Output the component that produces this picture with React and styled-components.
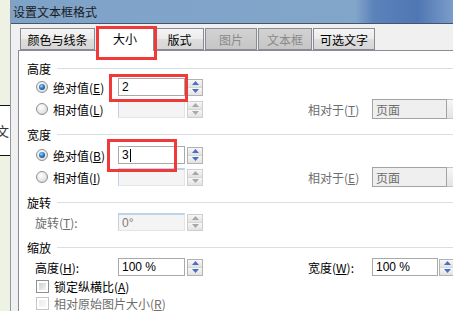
import React from 'react';
import styled, { createGlobalStyle } from 'styled-components';

const Global = createGlobalStyle`
  html, body { margin: 0; padding: 0; background: #eef2e2; }
  body { font-family: "Noto Sans CJK SC", "Liberation Sans", sans-serif; font-size: 12px; }
  * { box-sizing: border-box; }
`;

const Screen = styled.div`
  width: 453px;
  height: 311px;
  overflow: hidden;
  display: flex;
  position: relative;
  background: #eef2e2;
`;

const Desktop = styled.div`
  width: 10px;
  flex: none;
  display: flex;
  flex-direction: column;
  padding-top: 105px;
`;

const DocEdge = styled.div`
  height: 51px;
  background: #fff;
  border-top: 1px solid #111;
  border-bottom: 1px solid #111;
  display: flex;
  align-items: center;
  overflow: hidden;
  span { margin-left: -4px; font-size: 13px; color: #333; line-height: 1; }
`;

const Window = styled.div`
  flex: 1;
  min-width: 0;
  display: flex;
  flex-direction: column;
  border-left: 1px solid #8f9aa6;
`;

const TitleBar = styled.div`
  height: 24px;
  flex: none;
  border-bottom: 1px solid #44566b;
  background: linear-gradient(90deg, #7fa2c8 0%, #82a5ca 78%, #5c82ba 82%, #4f77b3 92%, #7b9dc9 100%);
  padding-left: 2px;
  display: flex;
  align-items: center;
  color: #1a1a1a;
  font-size: 12px;
`;

const Body = styled.div`
  flex: 1;
  background: #f0f0f0;
  padding-left: 7px;
  display: flex;
  flex-direction: column;
`;

const TabStrip = styled.div`
  height: 24px;
  margin-top: 2px;
  margin-left: 2px;
  display: flex;
  align-items: flex-end;
  gap: 1px;
  position: relative;
  z-index: 1;
`;

const Tab = styled.div`
  width: ${p => p.$w}px;
  height: ${p => (p.$active ? 25 : 22)}px;
  margin-bottom: ${p => (p.$active ? -1 : 0)}px;
  border: 1px solid #898c95;
  border-bottom: ${p => (p.$active ? 'none' : '1px solid #898c95')};
  background: ${p =>
    p.$active
      ? '#ffffff'
      : p.$disabled
      ? 'linear-gradient(#d2d2d2, #c6c6c6)'
      : 'linear-gradient(#f5f5f5, #ebebeb 50%, #dedede 51%, #d6d6d6)'};
  color: ${p => (p.$disabled ? '#8a8a8a' : '#000')};
  display: flex;
  align-items: center;
  justify-content: center;
  padding-bottom: ${p => (p.$active ? 2 : 0)}px;
  font-size: 12px;
`;

const Panel = styled.div`
  flex: 1;
  background: #fff;
  border-top: 1px solid #898c95;
  border-left: 1px solid #898c95;
  display: flex;
  flex-direction: column;
  padding-top: 9px;
`;

const Section = styled.div`
  display: flex;
  flex-direction: column;
  margin-top: ${p => p.$mt || 0}px;
`;

const Header = styled.div`
  height: 16px;
  padding-left: 8px;
  display: flex;
  align-items: center;
  margin-bottom: ${p => p.$mb || 0}px;
  color: #000;
  &::after {
    content: '';
    flex: 1;
    height: 1px;
    background: #d5dfe5;
    margin-left: 6px;
  }
`;

const Row = styled.div`
  height: ${p => p.$h || 22}px;
  padding-left: 17px;
  display: grid;
  grid-template-columns: 82px 67px 18px 105px 64px max-content;
  align-items: center;
  white-space: nowrap;
`;

const LeftCell = styled.div`
  display: flex;
  align-items: center;
  gap: 5px;
  color: ${p => (p.$disabled ? '#7a7a7a' : '#000')};
  margin-left: ${p => p.$ml || 0}px;
  white-space: nowrap;
`;

const Label = styled.span`
  color: ${p => (p.$disabled ? '#6d6d6d' : '#000')};
  u { text-decoration: underline; }
`;

const RadioDot = styled.span`
  width: 12px;
  height: 12px;
  border-radius: 50%;
  flex: none;
  border: 1px solid #8e8f8f;
  background: radial-gradient(circle at 40% 35%, #ffffff 0%, #eeeeee 40%, #cfcfcf 100%);
  display: flex;
  align-items: center;
  justify-content: center;
  &::after {
    content: '';
    display: ${p => (p.$checked ? 'block' : 'none')};
    width: 6px;
    height: 6px;
    border-radius: 50%;
    background: radial-gradient(circle at 40% 35%, #9fd6ff 0%, #2a79c4 45%, #0d3f7a 100%);
  }
`;

const CheckBox = styled.span`
  width: 13px;
  height: 13px;
  flex: none;
  border: 1px solid ${p => (p.$disabled ? '#c6c6c6' : '#8e8f8f')};
  background: #fff;
  padding: 2px;
  display: flex;
  &::after {
    content: '';
    flex: 1;
    background: ${p => (p.$disabled ? 'linear-gradient(135deg, #ececec, #f8f8f8)' : 'linear-gradient(135deg, #cfcfcf, #f4f4f4)')};
  }
`;

const Input = styled.div`
  width: ${p => p.$w || 67}px;
  height: 18px;
  display: flex;
  align-items: center;
  padding-left: 3px;
  font-family: "Liberation Sans", "Noto Sans CJK SC", sans-serif;
  font-size: 12px;
  ${p =>
    p.$disabled
      ? `
    background: #f4f4f4;
    border-top: 2px solid #bcd3ea;
    border-left: 1px solid #bcd3ea;
    border-right: 1px solid #e4e4e4;
    border-bottom: 1px solid #e4e4e4;
    color: #7a7a7a;
  `
      : `
    background: #fff;
    border: 1px solid #a9a9a9;
    color: #000;
  `}
`;

const Caret = styled.span`
  display: inline-block;
  width: 1px;
  height: 13px;
  background: #000;
  margin-left: 1px;
`;

const Spin = styled.div`
  width: 16px;
  height: 17px;
  margin-left: ${p => (p.$ml === undefined ? 2 : p.$ml)}px;
  border: 1px solid ${p => (p.$disabled ? '#cfcfcf' : '#b3b3b3')};
  display: flex;
  flex-direction: column;
`;

const SpinHalf = styled.div`
  flex: 1;
  display: flex;
  align-items: center;
  justify-content: center;
  background: linear-gradient(#f7f7f7, #e2e2e2);
  & + & { border-top: 1px solid ${p => (p.$disabled ? '#d6d6d6' : '#a8a8a8')}; }
`;

const Arrow = ({ up, disabled }) => (
  <svg width="7" height="4" viewBox="0 0 7 4">
    <polygon
      points={up ? '0,4 3.5,0 7,4' : '0,0 3.5,4 7,0'}
      fill={disabled ? '#a8a8a8' : '#4a6fc0'}
    />
  </svg>
);

const Spinner = ({ disabled, ml }) => (
  <Spin $disabled={disabled} $ml={ml}>
    <SpinHalf $disabled={disabled}><Arrow up disabled={disabled} /></SpinHalf>
    <SpinHalf $disabled={disabled}><Arrow disabled={disabled} /></SpinHalf>
  </Spin>
);

const RightLabel = styled.span`
  color: ${p => (p.$disabled ? '#6d6d6d' : '#000')};
  u { text-decoration: underline; }
`;

const Group = styled.div`
  display: flex;
  align-items: center;
`;

const Select = styled.div`
  width: 75px;
  height: 20px;
  background: #efefef;
  border: 1px solid #a3a3a3;
  color: #6d6d6d;
  display: flex;
  align-items: center;
  padding-left: 3px;
`;

const DropButton = styled.div`
  width: 17px;
  height: 20px;
  border: 1px solid #c4c4c4;
  border-left: none;
  background: linear-gradient(#f6f6f6, #e4e4e4);
`;

const Mark = styled.div`
  position: absolute;
  left: ${p => p.$x}px;
  top: ${p => p.$y}px;
  width: ${p => p.$w}px;
  height: ${p => p.$h}px;
  border: 3px solid #f03a3a;
  pointer-events: none;
  z-index: 5;
`;

const Radio = ({ checked, children }) => (
  <LeftCell>
    <RadioDot $checked={checked} />
    <Label>{children}</Label>
  </LeftCell>
);

export default function App() {
  return (
    <>
      <Global />
      <Screen>
        <Desktop>
          <DocEdge><span>文</span></DocEdge>
        </Desktop>
        <Window>
          <TitleBar>设置文本框格式</TitleBar>
          <Body>
            <TabStrip>
              <Tab $w={75}>颜色与线条</Tab>
              <Tab $w={58} $active>大小</Tab>
              <Tab $w={49}>版式</Tab>
              <Tab $w={52} $disabled>图片</Tab>
              <Tab $w={54} $disabled>文本框</Tab>
              <Tab $w={62}>可选文字</Tab>
            </TabStrip>
            <Panel>
              <Section>
                <Header>高度</Header>
                <Row>
                  <Radio checked>绝对值(<u>E</u>)</Radio>
                  <Input>2</Input>
                  <Spinner />
                </Row>
                <Row>
                  <Radio>相对值(<u>L</u>)</Radio>
                  <Input $disabled />
                  <Spinner disabled />
                  <span />
                  <RightLabel $disabled>相对于(<u>T</u>)</RightLabel>
                  <Group>
                    <Select>页面</Select>
                    <DropButton />
                  </Group>
                </Row>
              </Section>
              <Section $mt={6}>
                <Header $mb={2}>宽度</Header>
                <Row>
                  <Radio checked>绝对值(<u>B</u>)</Radio>
                  <Input>3<Caret /></Input>
                  <Spinner />
                </Row>
                <Row>
                  <Radio>相对值(<u>I</u>)</Radio>
                  <Input $disabled />
                  <Spinner disabled />
                  <span />
                  <RightLabel $disabled>相对于(<u>E</u>)</RightLabel>
                  <Group>
                    <Select>页面</Select>
                    <DropButton />
                  </Group>
                </Row>
              </Section>
              <Section $mt={6}>
                <Header $mb={1}>旋转</Header>
                <Row>
                  <LeftCell $disabled $ml={-1}>
                    <Label $disabled>旋转(<u>T</u>):</Label>
                  </LeftCell>
                  <Input $disabled>0°</Input>
                  <Spinner disabled />
                </Row>
              </Section>
              <Section $mt={6}>
                <Header $mb={1}>缩放</Header>
                <Row>
                  <LeftCell $ml={-1}>
                    <Label>高度(<u>H</u>):</Label>
                  </LeftCell>
                  <Input>100 %</Input>
                  <Spinner />
                  <span />
                  <RightLabel>宽度(<u>W</u>):</RightLabel>
                  <Group>
                    <Input $w={66}>100 %</Input>
                    <Spinner ml={1} />
                  </Group>
                </Row>
                <Row $h={17}>
                  <LeftCell>
                    <CheckBox />
                    <Label>锁定纵横比(<u>A</u>)</Label>
                  </LeftCell>
                </Row>
                <Row $h={17}>
                  <LeftCell>
                    <CheckBox $disabled />
                    <Label $disabled>相对原始图片大小(<u>R</u>)</Label>
                  </LeftCell>
                </Row>
              </Section>
            </Panel>
          </Body>
        </Window>
        <Mark $x={96} $y={26} $w={61} $h={34} />
        <Mark $x={109} $y={74} $w={79} $h={28} />
        <Mark $x={107} $y={139} $w={70} $h={33} />
      </Screen>
    </>
  );
}
